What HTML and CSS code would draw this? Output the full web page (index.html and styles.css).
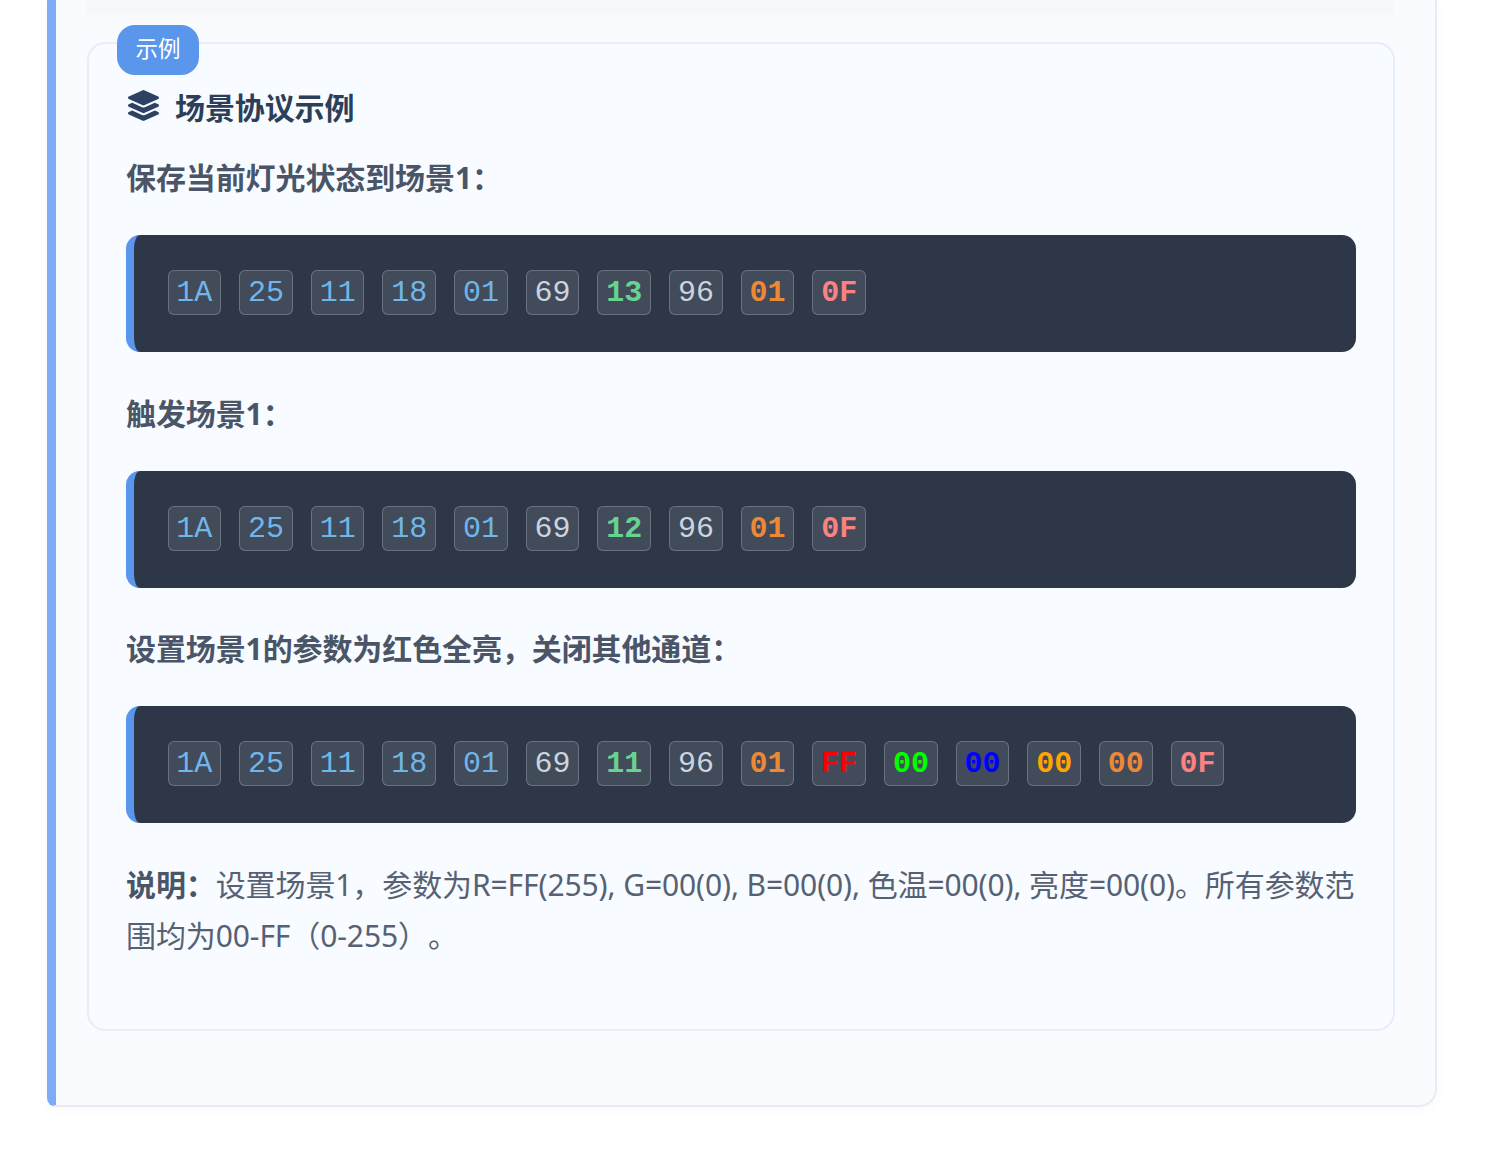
FILE: index.html
```html
<!DOCTYPE html>
<html lang="zh-CN">
<head>
<meta charset="utf-8">
<title>场景协议示例</title>
<link rel="stylesheet" href="styles.css">
</head>
<body>
<main class="card">
  <div class="strip"></div>
  <section class="example">
    <span class="badge">示例</span>
    <h4 class="title">
      <svg class="title-icon" viewBox="0 0 512 512" aria-hidden="true"><path d="M12.41 148.02l232.94 105.67c6.8 3.09 14.49 3.09 21.29 0l232.94-105.67c16.55-7.51 16.55-32.52 0-40.03L266.65 2.31a25.607 25.607 0 0 0-21.29 0L12.41 107.98c-16.55 7.51-16.55 32.53 0 40.04zm487.18 88.28l-58.09-26.33-161.64 73.27c-7.56 3.43-15.59 5.17-23.86 5.17s-16.29-1.74-23.86-5.17L70.51 209.97l-58.1 26.33c-16.55 7.5-16.55 32.5 0 40l232.94 105.59c6.8 3.08 14.49 3.08 21.29 0L499.59 276.3c16.55-7.5 16.55-32.5 0-40zm0 127.8l-57.87-26.23-161.86 73.37c-7.56 3.43-15.59 5.17-23.86 5.17s-16.29-1.74-23.86-5.17L70.29 337.87 12.41 364.1c-16.55 7.5-16.55 32.5 0 40l232.94 105.59c6.8 3.08 14.49 3.08 21.29 0L499.59 404.1c16.55-7.5 16.55-32.5 0-40z"/></svg>
      <span>场景协议示例</span>
    </h4>
    <p class="label">保存当前灯光状态到场景1：</p>
    <div class="code">
      <span class="tok blue">1A</span><span class="tok blue">25</span><span class="tok blue">11</span><span class="tok blue">18</span><span class="tok blue">01</span><span class="tok gray">69</span><span class="tok green">13</span><span class="tok gray">96</span><span class="tok orange">01</span><span class="tok salmon">0F</span>
    </div>
    <p class="label">触发场景1：</p>
    <div class="code">
      <span class="tok blue">1A</span><span class="tok blue">25</span><span class="tok blue">11</span><span class="tok blue">18</span><span class="tok blue">01</span><span class="tok gray">69</span><span class="tok green">12</span><span class="tok gray">96</span><span class="tok orange">01</span><span class="tok salmon">0F</span>
    </div>
    <p class="label">设置场景1的参数为红色全亮，关闭其他通道：</p>
    <div class="code">
      <span class="tok blue">1A</span><span class="tok blue">25</span><span class="tok blue">11</span><span class="tok blue">18</span><span class="tok blue">01</span><span class="tok gray">69</span><span class="tok green">11</span><span class="tok gray">96</span><span class="tok orange">01</span><span class="tok pure-red">FF</span><span class="tok pure-green">00</span><span class="tok pure-blue">00</span><span class="tok amber">00</span><span class="tok orange">00</span><span class="tok salmon">0F</span>
    </div>
    <p class="note"><strong>说明：</strong>设置场景1，参数为R=FF(255), G=00(0), B=00(0), 色温=00(0), 亮度=00(0)。所有参数范围均为00-FF（0-255）。</p>
  </section>
</main>
</body>
</html>
```
FILE: styles.css
```css
* { box-sizing: border-box; }
html, body { margin: 0; background: #fff; }
body {
  padding: 0 63px 54px 47px;
  font-family: "Noto Sans", "Noto Sans CJK SC", sans-serif;
  color: #4a5568;
}
.card {
  height: 1107px;
  padding: 0 40px 0 31px;
  background: #fafbfe;
  border-left: 9px solid #7eabf6;
  border-right: 2px solid #e8ebf5;
  border-bottom: 2px solid #e8ebf5;
  border-radius: 0 0 18px 9px;
  box-shadow: 0 3px 12px rgba(90, 110, 180, 0.03);
}
.strip { height: 15px; background: #f7f8fb; }
.example {
  position: relative;
  height: 989px;
  margin-top: 27px;
  padding: 36.5px 37px 0;
  background: #f8fbff;
  border: 2px solid #e6eef9;
  border-radius: 18px;
}
.badge {
  position: absolute;
  left: 28px;
  top: -19px;
  width: 82px;
  height: 50px;
  padding-bottom: 5px;
  display: flex;
  align-items: center;
  justify-content: center;
  background: #5a96ec;
  border-radius: 18px;
  color: #fff;
  font-size: 22.5px;
}
.title {
  display: flex;
  align-items: center;
  gap: 16px;
  margin: 0 0 21.5px;
  height: 50px;
  color: #2d3f58;
  font-size: 30px;
  font-weight: 700;
  letter-spacing: -0.1px;
}
.title-icon { width: 31px; height: 31px; margin-left: 2px; fill: #2d4263; }
.label {
  margin: 35.67px 0 32px;
  height: 51px;
  font-size: 30px;
  line-height: 51px;
  font-weight: 700;
  letter-spacing: -0.1px;
}
.title + .label { margin-top: 0; }
.code {
  display: flex;
  gap: 18px;
  height: 117px;
  padding: 35px 33.5px;
  background: #2d3748;
  border-left: 8px solid #5a96ec;
  border-radius: 14px;
}
.tok {
  width: 53.67px;
  height: 45px;
  padding-top: 1px;
  display: flex;
  align-items: center;
  justify-content: center;
  background: rgba(255, 255, 255, 0.1);
  border: 1px solid rgba(255, 255, 255, 0.22);
  border-radius: 6px;
  font-family: "Liberation Mono", monospace;
  font-size: 30px;
}
.blue { color: #6fb6ea; }
.gray { color: #cbd5e0; }
.green { color: #68d391; font-weight: 700; }
.orange { color: #ed8936; font-weight: 700; }
.salmon { color: #fc8181; font-weight: 700; }
.pure-red { color: #f00; font-weight: 700; }
.pure-green { color: #0f0; font-weight: 700; }
.pure-blue { color: #00f; font-weight: 700; }
.amber { color: #ffa500; font-weight: 700; }
.note {
  margin: 35.67px 0 0;
  color: #566274;
  font-size: 30px;
  line-height: 51px;
  letter-spacing: -0.1px;
  text-spacing-trim: space-all;
}
.note strong { color: #4a5568; font-weight: 700; }
```
